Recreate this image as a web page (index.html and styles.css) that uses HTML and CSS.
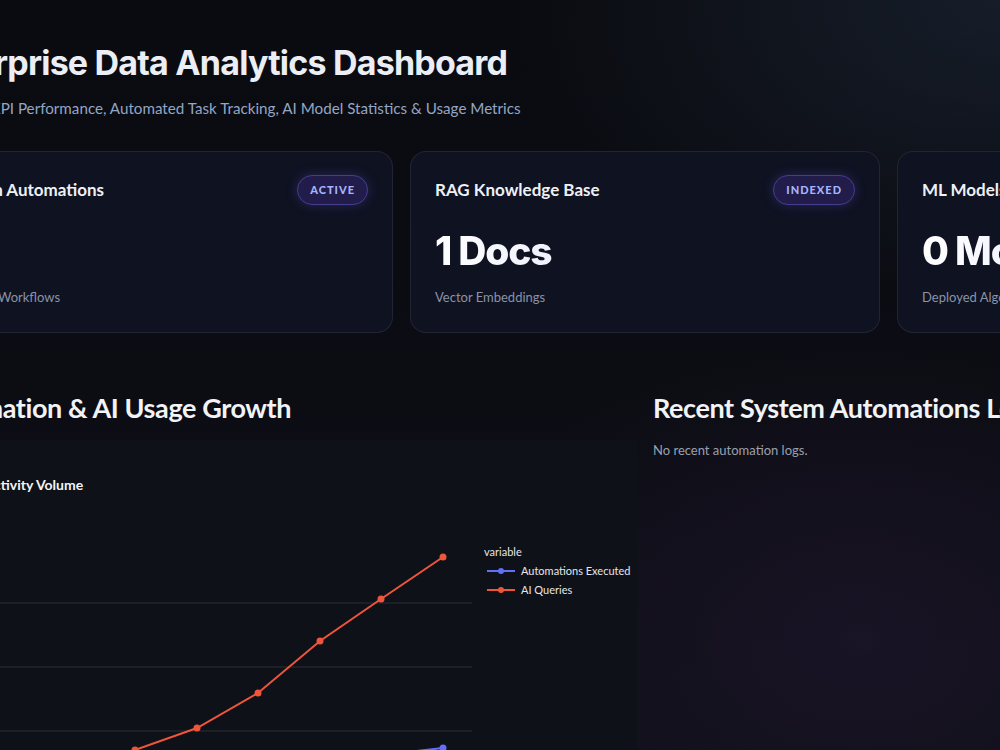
FILE: index.html
```html
<!DOCTYPE html>
<html lang="en">
<head>
    <meta charset="UTF-8">
    <meta name="viewport" content="width=device-width, initial-scale=1.0">
    <title>Enterprise Data Analytics Dashboard</title>
    <link rel="stylesheet" href="styles.css">
</head>
<body>
    <div class="app">
        <main class="main">
            <!-- Page header -->
            <header class="hero">
                <h1 class="hero-title">Enterprise Data Analytics Dashboard</h1>
                <p class="hero-sub">Real-time KPI Performance, Automated Task Tracking, AI Model Statistics &amp; Usage Metrics</p>
            </header>

            <!-- KPI cards -->
            <section class="kpi-row">
                <div class="kpi-card">
                    <div class="kpi-head">
                        <span class="kpi-title">Python Automations</span>
                        <span class="badge">ACTIVE</span>
                    </div>
                    <div class="kpi-value"></div>
                    <div class="kpi-label">Running Workflows</div>
                </div>
                <div class="kpi-card">
                    <div class="kpi-head">
                        <span class="kpi-title">RAG Knowledge Base</span>
                        <span class="badge">INDEXED</span>
                    </div>
                    <div class="kpi-value">1 Docs</div>
                    <div class="kpi-label">Vector Embeddings</div>
                </div>
                <div class="kpi-card">
                    <div class="kpi-head">
                        <span class="kpi-title">ML Models</span>
                        <span class="badge">DEPLOYED</span>
                    </div>
                    <div class="kpi-value">0 Models</div>
                    <div class="kpi-label">Deployed Algorithms</div>
                </div>
            </section>

            <!-- Chart + logs -->
            <section class="panels">
                <div class="panel">
                    <h3 class="panel-title">Automation &amp; AI Usage Growth</h3>
                    <div class="chart">
                        <svg width="714" height="340" viewBox="0 0 714 340">
                            <text x="27" y="30" class="chart-title">Daily Activity Volume</text>

                            <g stroke="#2c2f38" stroke-width="1">
                                <line x1="40" y1="143" x2="549" y2="143"/>
                                <line x1="40" y1="207" x2="549" y2="207"/>
                                <line x1="40" y1="271" x2="549" y2="271"/>
                                <line x1="40" y1="335" x2="549" y2="335"/>
                            </g>

                            <!-- Automations Executed -->
                            <polyline fill="none" stroke="#636efa" stroke-width="2"
                                points="28,303 89,302 151,302 212,301 274,300 335,299 397,298 458,295 520,288"/>
                            <g fill="#636efa">
                                <circle cx="28" cy="303" r="3.5"/><circle cx="89" cy="302" r="3.5"/>
                                <circle cx="151" cy="302" r="3.5"/><circle cx="212" cy="301" r="3.5"/>
                                <circle cx="274" cy="300" r="3.5"/><circle cx="335" cy="299" r="3.5"/>
                                <circle cx="397" cy="298" r="3.5"/><circle cx="458" cy="295" r="3.5"/>
                                <circle cx="520" cy="288" r="3.5"/>
                            </g>

                            <!-- AI Queries -->
                            <polyline fill="none" stroke="#ef553b" stroke-width="2"
                                points="28,325 89,318 151,308 212,290 274,268 335,233 397,181 458,139 520,97"/>
                            <g fill="#ef553b">
                                <circle cx="28" cy="325" r="3.5"/><circle cx="89" cy="318" r="3.5"/>
                                <circle cx="151" cy="308" r="3.5"/><circle cx="212" cy="290" r="3.5"/>
                                <circle cx="274" cy="268" r="3.5"/><circle cx="335" cy="233" r="3.5"/>
                                <circle cx="397" cy="181" r="3.5"/><circle cx="458" cy="139" r="3.5"/>
                                <circle cx="520" cy="97" r="3.5"/>
                            </g>

                            <!-- legend -->
                            <g class="legend">
                                <text x="561" y="96">variable</text>
                                <line x1="564" y1="111" x2="592" y2="111" stroke="#636efa" stroke-width="2"/>
                                <circle cx="578" cy="111" r="3" fill="#636efa"/>
                                <text x="598" y="115">Automations Executed</text>
                                <line x1="564" y1="130" x2="592" y2="130" stroke="#ef553b" stroke-width="2"/>
                                <circle cx="578" cy="130" r="3" fill="#ef553b"/>
                                <text x="598" y="134">AI Queries</text>
                            </g>
                        </svg>
                    </div>
                </div>
                <div class="panel">
                    <h3 class="panel-title">Recent System Automations Log</h3>
                    <p class="empty">No recent automation logs.</p>
                </div>
            </section>
        </main>
    </div>
</body>
</html>
```

FILE: styles.css
```css
html, body {
    margin: 0;
    padding: 0;
    height: 100%;
}

body {
    overflow: hidden;
    background-color: #0b0c12;
    background-image:
        radial-gradient(ellipse 700px 420px at 1000px 0px, rgba(32, 44, 62, 0.55), transparent 70%),
        radial-gradient(ellipse 600px 420px at 860px 640px, rgba(40, 26, 56, 0.45), transparent 70%),
        linear-gradient(180deg, #0a0b10 0%, #0e0f17 100%);
    font-family: Lato, "Noto Sans", sans-serif;
    color: #e8eaf2;
}

.app {
    width: 1000px;
    height: 750px;
    overflow: hidden;
}

.main {
    width: 1444px;
    margin-left: -77px;
}

/* header */
.hero {
    padding-top: 40px;
}

.hero-title {
    margin: 0;
    font-family: Inter, sans-serif;
    font-size: 34px;
    font-weight: 700;
    letter-spacing: -0.8px;
    line-height: 46px;
    color: #eceef6;
}

.hero-sub {
    margin: 11px 0 0;
    font-size: 15.2px;
    line-height: 22px;
    color: #93a6c4;
}

/* KPI cards */
.kpi-row {
    display: grid;
    grid-template-columns: repeat(3, 1fr);
    gap: 17px;
    margin-top: 32px;
}

.kpi-card {
    height: 182px;
    box-sizing: border-box;
    padding: 23px 24px 0;
    background: #0f1221;
    border: 1px solid rgba(255, 255, 255, 0.08);
    border-radius: 16px;
}

.kpi-head {
    display: flex;
    justify-content: space-between;
    align-items: center;
    height: 29px;
}

.kpi-title {
    font-size: 17px;
    font-weight: 700;
    color: #eef0f6;
}

.badge {
    display: inline-block;
    box-sizing: border-box;
    height: 30px;
    line-height: 28px;
    padding: 0 12px;
    border: 1px solid #463d8f;
    border-radius: 15px;
    background: #211c4a;
    box-shadow: 0 0 12px rgba(99, 102, 241, 0.25);
    color: #a5b4fc;
    font-size: 11px;
    font-weight: 900;
    letter-spacing: 1px;
}

.kpi-value {
    height: 48px;
    margin-top: 23px;
    font-family: Inter, sans-serif;
    font-size: 39px;
    font-weight: 800;
    letter-spacing: -1.2px;
    line-height: 48px;
    background: linear-gradient(90deg, #ffffff 0%, #c7cdf5 100%);
    -webkit-background-clip: text;
    background-clip: text;
    color: transparent;
}

.kpi-label {
    margin-top: 14px;
    font-size: 13px;
    color: #8a93a8;
}

/* lower panels */
.panels {
    display: grid;
    grid-template-columns: 1fr 1fr;
    gap: 16px;
    margin-top: 55px;
}

.panel-title {
    margin: 0;
    font-size: 27px;
    font-weight: 700;
    line-height: 40px;
    color: #f2f3f7;
    letter-spacing: -0.4px;
}

.empty {
    margin: 14px 0 0;
    font-size: 13px;
    color: #9aa0ad;
}

.chart {
    margin-top: 12px;
    padding-top: 20px;
    background: #0e1117;
}

.chart svg {
    display: block;
}

.chart-title {
    font-family: Lato, sans-serif;
    font-size: 14px;
    font-weight: 700;
    fill: #f4f4f6;
}

.legend text {
    font-family: Lato, sans-serif;
    font-size: 11px;
    fill: #e6e6ea;
}
```
